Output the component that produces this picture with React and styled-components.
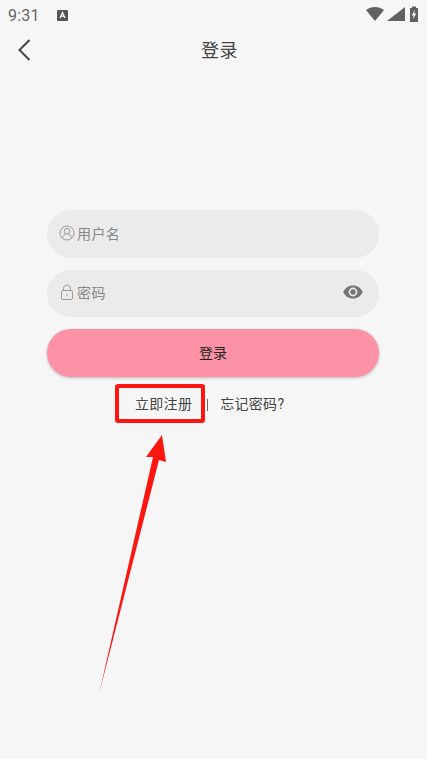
import styled, { createGlobalStyle } from 'styled-components'

const GlobalStyle = createGlobalStyle`
    html, body {
        margin: 0;
        padding: 0;
        background-color: #f6f6f6;
    }
    * {
        box-sizing: border-box;
    }
`

const Page = styled.div`
    position: relative;
    width: 427px;
    height: 759px;
    overflow: hidden;
    background-color: #f6f6f6;
    font-family: "Roboto", "Noto Sans CJK SC", sans-serif;
`

const StatusBar = styled.div`
    height: 30px;
    padding: 0 9px 0 8px;
    display: flex;
    align-items: center;
    color: #666;
`

const Time = styled.span`
    font-size: 16px;
    letter-spacing: 0.2px;
    margin-right: 17px;
`

const StatusIcons = styled.div`
    margin: 0 0 2px auto;
    display: flex;
    align-items: center;
`

const NavBar = styled.div`
    position: relative;
    height: 40px;
    padding: 0 0 2px 12px;
    display: flex;
    align-items: center;
    justify-content: center;
`

const BackButton = styled.div`
    position: absolute;
    left: 17px;
    top: 9px;
    display: flex;
`

const NavTitle = styled.div`
    font-size: 18px;
    letter-spacing: 0.5px;
    color: #444;
`

const Form = styled.div`
    margin: 140px 48px 0 47px;
    display: flex;
    flex-direction: column;
    gap: 12px;
`

const Field = styled.div`
    height: 47.5px;
    border-radius: 24px;
    background-color: #ebebeb;
    padding: 0 16px 2px 12px;
    display: flex;
    align-items: center;
`

const FieldLabel = styled.span`
    margin-left: 2px;
    font-size: 14px;
    color: #888;
    letter-spacing: 0.4px;
`

const EyeIcon = styled.svg`
    margin-left: auto;
`

const LoginButton = styled.div`
    height: 47.5px;
    padding-bottom: 2px;
    border-radius: 24px;
    background-color: #fd92a6;
    box-shadow: 0 1px 3px rgba(0, 0, 0, 0.25);
    display: flex;
    align-items: center;
    justify-content: center;
    font-size: 14px;
    color: #222;
`

const Links = styled.div`
    margin: 6px 0 0 88px;
    display: flex;
    align-items: center;
    font-size: 14px;
    line-height: 18px;
    letter-spacing: 0.3px;
    color: #444;
`

const Divider = styled.span`
    width: 1px;
    height: 12px;
    margin: 2px 12.5px 0 14.5px;
    background-color: #666;
`

const Highlight = styled.div`
    position: absolute;
    left: 115px;
    top: 384px;
    width: 90px;
    height: 39px;
    border: 4px solid #fb1610;
    border-radius: 3px;
`

const Arrow = styled.svg`
    position: absolute;
    left: 90px;
    top: 425px;
`

const App = () => {
    return (
        <Page>
            <GlobalStyle />
            <StatusBar>
                <Time>9:31</Time>
                <svg width="11" height="11" viewBox="0 0 11 11">
                    <rect width="11" height="11" rx="1" fill="#555" />
                    <path d="M3 8 L5.5 2.5 L8 8 M4 6.2 H7" stroke="#fff" strokeWidth="1.2" fill="none" />
                </svg>
                <StatusIcons>
                    <svg width="52" height="16" viewBox="0 0 52 16">
                        <path d="M0 4 C5 0 13 0 18 4 L9 15 Z" fill="#616161" />
                        <path d="M21 15 L39 15 L39 1 Z" fill="#616161" />
                        <path d="M44 2 H46 V0.5 H50 V2 H52 V16 H44 Z" fill="#616161" />
                        <path d="M48.8 3.5 L45.8 9.5 H47.6 L47 13.5 L50.2 7.5 H48.2 Z" fill="#f6f6f6" />
                    </svg>
                </StatusIcons>
            </StatusBar>
            <NavBar>
                <BackButton>
                    <svg width="14" height="22" viewBox="0 0 14 22">
                        <path d="M12.5 1 L2.5 11 L12.5 21" stroke="#444" strokeWidth="2" fill="none" />
                    </svg>
                </BackButton>
                <NavTitle>登录</NavTitle>
            </NavBar>
            <Form>
                <Field>
                    <svg width="16" height="16" viewBox="0 0 16 16" fill="none" stroke="#999" strokeWidth="1">
                        <circle cx="8" cy="8" r="7" />
                        <circle cx="8" cy="6.2" r="2.8" />
                        <path d="M3.4 13 C4.2 10.6 5.6 9.6 6.6 9.2 M12.6 13 C11.8 10.6 10.4 9.6 9.4 9.2" />
                    </svg>
                    <FieldLabel>用户名</FieldLabel>
                </Field>
                <Field>
                    <svg width="16" height="16" viewBox="0 0 16 16" fill="none" stroke="#999" strokeWidth="1">
                        <rect x="2.5" y="6.5" width="11" height="9" rx="1.5" />
                        <path d="M4.5 6.5 V4.5 C4.5 0 11.5 0 11.5 4.5 V6.5 M8 10 V12" />
                    </svg>
                    <FieldLabel>密码</FieldLabel>
                    <EyeIcon width="20" height="14" viewBox="0 0 20 14">
                        <path
                            fillRule="evenodd"
                            d="M10 0.5 C5.5 0.5 1.8 3.2 0.2 7 C1.8 10.8 5.5 13.5 10 13.5 C14.5 13.5 18.2 10.8 19.8 7 C18.2 3.2 14.5 0.5 10 0.5 Z M10 2.6 A4.4 4.4 0 1 1 10 11.4 A4.4 4.4 0 1 1 10 2.6 Z"
                            fill="#757575"
                        />
                        <circle cx="10" cy="7" r="2.7" fill="#757575" />
                    </EyeIcon>
                </Field>
                <LoginButton>登录</LoginButton>
                <Links>
                    <span>立即注册</span>
                    <Divider />
                    <span>忘记密码?</span>
                </Links>
            </Form>
            <Highlight />
            <Arrow width="80" height="270" viewBox="0 0 80 270">
                <path d="M9.5 267 L63 32 L56 32 L72 10 L76 37 L69 35 Z" fill="#fb1610" />
            </Arrow>
        </Page>
    )
}

export default App
